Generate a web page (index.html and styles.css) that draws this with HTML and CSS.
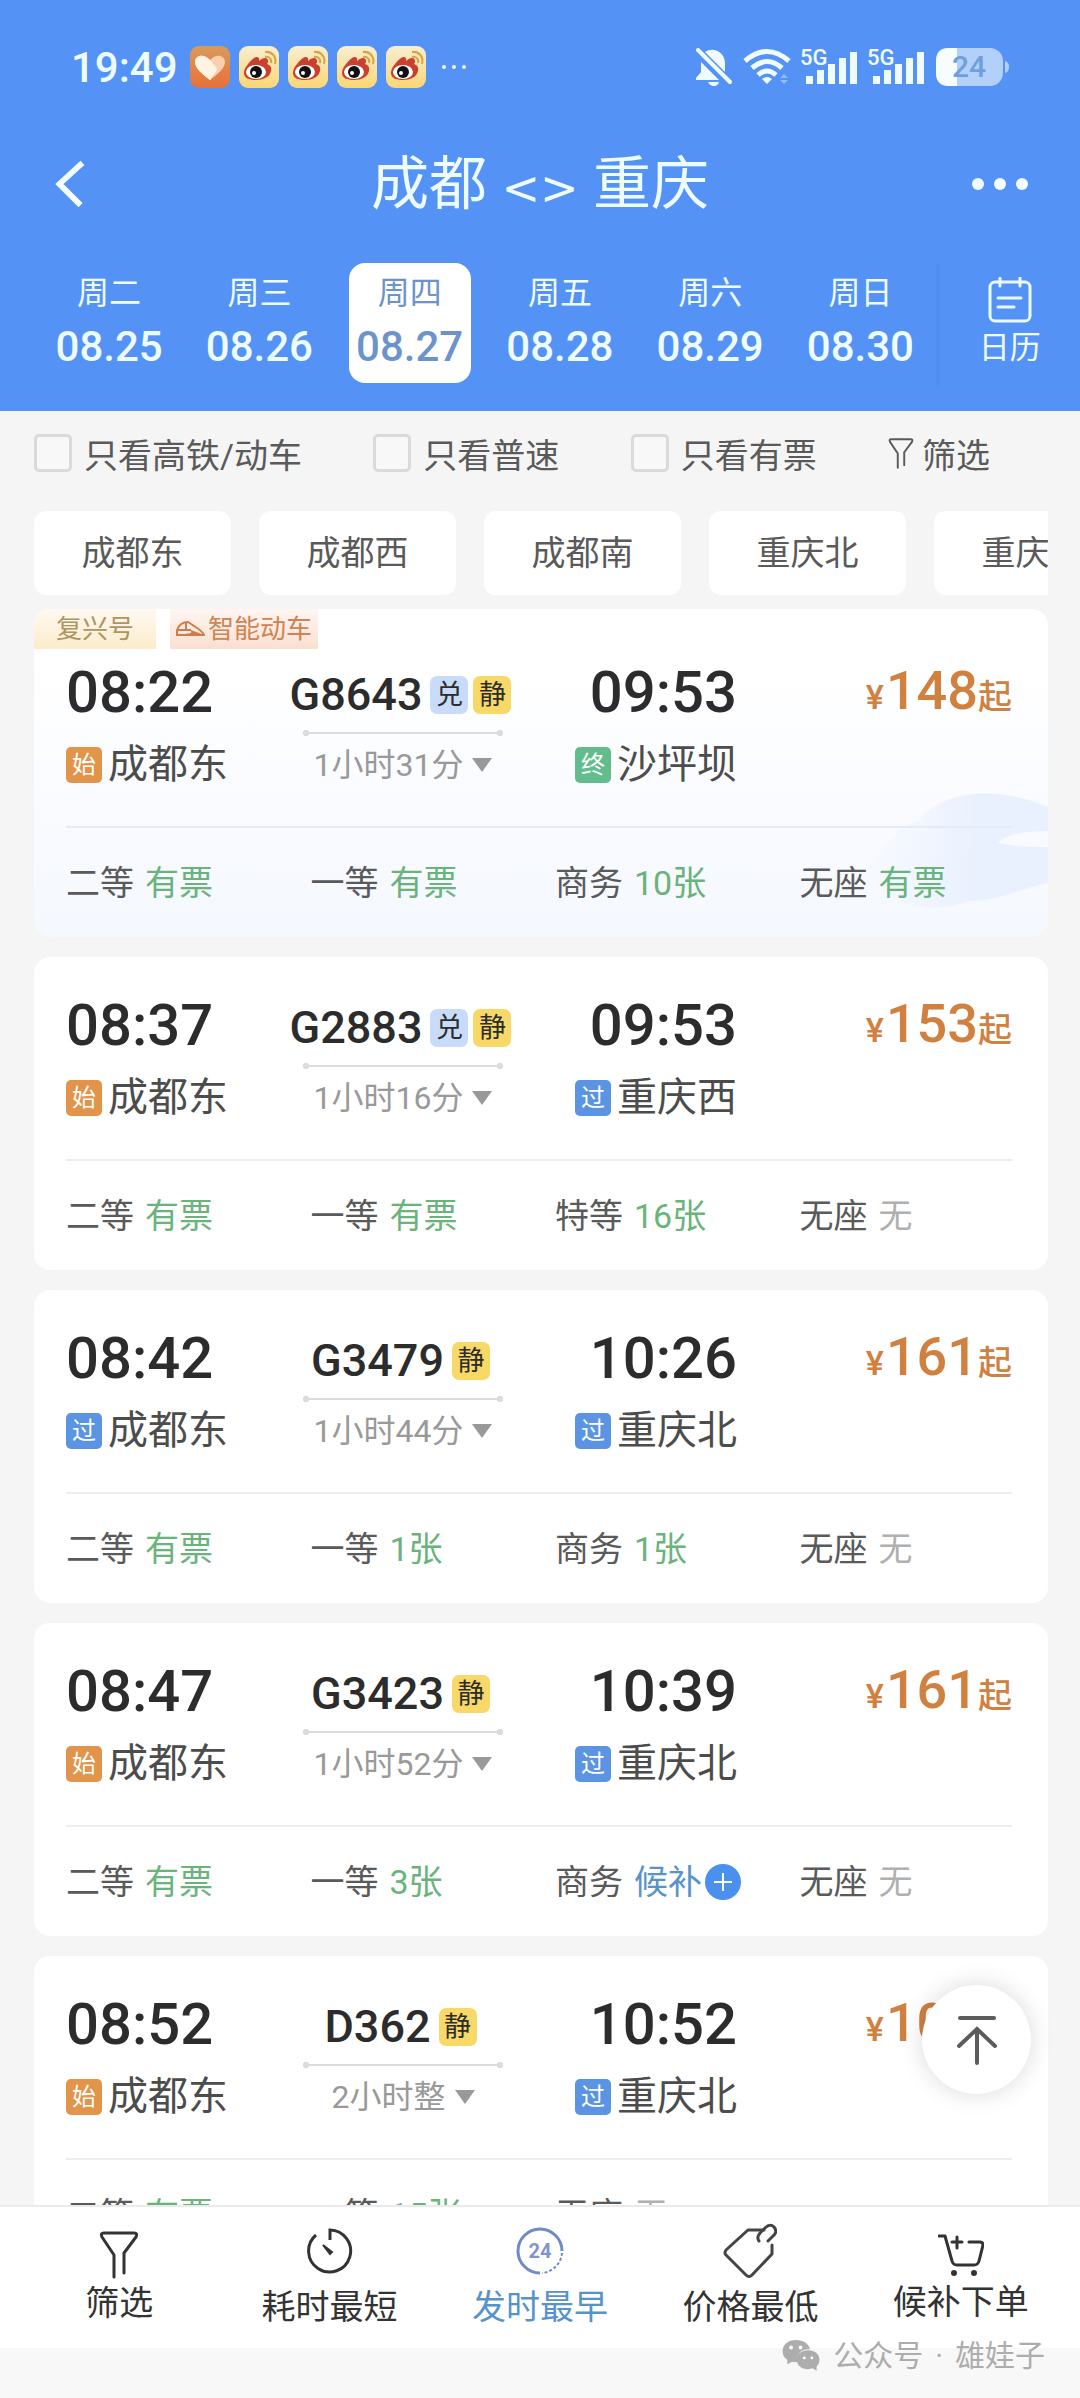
FILE: index.html
```html
<!DOCTYPE html>
<html lang="zh-CN">
<head>
  <meta charset="UTF-8">
  <meta name="viewport" content="width=device-width, initial-scale=1.0">
  <title>成都 - 重庆</title>
  <link rel="stylesheet" href="styles.css">
</head>
<body>
  <svg class="defs" aria-hidden="true">
    <symbol id="weibo" viewBox="0 0 40 42">
      <linearGradient id="wbg" x1="0" y1="0" x2="0" y2="1"><stop offset="0" stop-color="#f7efd2"/><stop offset="1" stop-color="#fbd673"/></linearGradient>
      <rect width="40" height="42" rx="9" fill="url(#wbg)"/>
      <path d="M5 27c0-5 5-11 10-15 3-2 6-1 5 3 4-4 9-4 9 0 0 1 0 2-1 3 3 1 5 3 4 7-1 6-8 9-15 9S5 32 5 27z" fill="#c9402f"/>
      <ellipse cx="17" cy="26" rx="10" ry="7" fill="#fff"/>
      <circle cx="17" cy="26" r="6" fill="#111"/>
      <circle cx="15" cy="27" r="2" fill="#fff"/>
      <path d="M26 6c7-1 12 5 10 12M26 11c4-1 7 2 6 6" fill="none" stroke="#d9a441" stroke-width="2"/>
    </symbol>
    <symbol id="bars" viewBox="0 0 56 38">
      <path d="M4 28h7v8H4zM15 22h7v14h-7zM26 16h7v20h-7zM37 10h7v26h-7zM48 4h7v32h-7z"/>
    </symbol>
    <symbol id="funnel" viewBox="0 0 40 48">
      <path d="M15 46V24L3 6q-2-4 2-4h30q4 0 2 4L25 22v20" fill="none" stroke="currentColor" stroke-width="3" stroke-linecap="round" stroke-linejoin="round"/>
    </symbol>
  </svg>

  <header>
    <div class="status">
      <div class="status-side">
        <span class="clock">19:49</span>
        <svg width="40" height="42" viewBox="0 0 40 42"><linearGradient id="hbg" x1="0" y1="0" x2="0" y2="1"><stop offset="0" stop-color="#d99a5c"/><stop offset="1" stop-color="#e8703a"/></linearGradient><rect width="40" height="42" rx="9" fill="url(#hbg)"/><path d="M20 34C12 28 5 22 5 16c0-7 9-9 15-2 6-7 15-5 15 2 0 6-7 12-15 18z" fill="#f9cfae"/><path d="M20 34C12 28 5 22 5 16c0-7 9-9 15-2l6 7q2 3-1 6z" fill="#fff3e4"/></svg>
        <svg width="40" height="42"><use href="#weibo"/></svg>
        <svg width="40" height="42"><use href="#weibo"/></svg>
        <svg width="40" height="42"><use href="#weibo"/></svg>
        <svg width="40" height="42"><use href="#weibo"/></svg>
        <svg class="more-apps" width="26" height="6" viewBox="0 0 26 6"><circle cx="3" cy="3" r="2"/><circle cx="13" cy="3" r="2"/><circle cx="23" cy="3" r="2"/></svg>
      </div>
      <div class="status-side icons">
        <svg width="36" height="38" viewBox="0 0 36 38"><path d="M9 4c9-6 20 1 20 11v9zM5 14l18 18H0v-2l5-6zM12 34h11q-1 4-5 4t-6-4z"/><path d="M2 2l32 32" stroke="#f0fbff" stroke-width="4" stroke-linecap="round"/></svg>
        <svg width="48" height="36" viewBox="0 0 48 36" fill="none" stroke="#f0fbff" stroke-width="5"><path d="M2 12q22-19 44 0M9 19q15-13 30 0M15 26q9-8 18 0"/><path d="M24 35l-5-5q5-4 10 0z" fill="#f0fbff" stroke="none"/><path d="M37 29l4-4 4 4zM37 31l4 4 4-4z" fill="#8fbcf8" stroke="none"/></svg>
        <svg width="56" height="38"><text x="-2" y="17">5G</text><use href="#bars"/></svg>
        <svg width="56" height="38"><text x="-2" y="17">5G</text><use href="#bars"/></svg>
        <svg width="74" height="38" viewBox="0 0 74 38"><rect width="67" height="38" rx="13" fill="#b3d0fb"/><path d="M13 0h8v38h-8Q0 38 0 25V13Q0 0 13 0z" fill="#f6fdff"/><path d="M69 13q4 1 4 6t-4 6z" fill="#b3d0fb"/><text class="level" x="33" y="29" text-anchor="middle">24</text></svg>
      </div>
    </div>

    <div class="title-bar">
      <button class="icon-btn" aria-label="返回"><svg width="34" height="48" viewBox="0 0 34 50" fill="none" stroke="#f4fdff" stroke-width="6"><path d="M31 3L7 25l22 22"/></svg></button>
      <h1>成都 <span>&lt;&gt;</span> 重庆</h1>
      <button class="icon-btn" aria-label="更多"><svg width="56" height="12" viewBox="0 0 56 12" fill="#f4fdff"><circle cx="6" cy="6" r="6"/><circle cx="28" cy="6" r="6"/><circle cx="50" cy="6" r="6"/></svg></button>
    </div>

    <div class="dates">
      <div class="days">
        <button class="day"><span>周二</span><b>08.25</b></button>
        <button class="day"><span>周三</span><b>08.26</b></button>
        <button class="day active"><span>周四</span><b>08.27</b></button>
        <button class="day"><span>周五</span><b>08.28</b></button>
        <button class="day"><span>周六</span><b>08.29</b></button>
        <button class="day"><span>周日</span><b>08.30</b></button>
      </div>
      <button class="calendar">
        <svg width="44" height="46" viewBox="0 0 44 46" fill="none" stroke="#eafbff" stroke-width="3" stroke-linecap="round"><rect x="2" y="5" width="40" height="39" rx="5"/><path d="M12 1v8M32 1v8M10 21h23M10 30h16"/></svg>
        日历
      </button>
    </div>
  </header>

  <main>
    <div class="filters">
      <label><input type="checkbox">只看高铁/动车</label>
      <label><input type="checkbox">只看普速</label>
      <label><input type="checkbox">只看有票</label>
      <button><svg width="26" height="31"><use href="#funnel"/></svg>筛选</button>
    </div>

    <div class="stations">
      <button>成都东</button>
      <button>成都西</button>
      <button>成都南</button>
      <button>重庆北</button>
      <button>重庆西</button>
    </div>

    <div class="trains">
      <article class="card smart">
        <svg class="cloud" width="180" height="130" viewBox="0 0 180 130"><linearGradient id="cbg"><stop offset="0" stop-color="#eaf1fe" stop-opacity="0"/><stop offset="0.6" stop-color="#eaf1fe"/></linearGradient><path d="M0 80C20 40 40 30 50 28 80-8 140-4 180 14v24c-20 0-40 2-50 12 20 4 35 4 50 4v36c-30 6-50 18-80 18C70 120 20 118 0 80z" fill="url(#cbg)"/></svg>
        <div class="labels">
          <span class="fuxing">复兴号</span>
          <span class="zhineng"><svg width="29" height="16" viewBox="0 0 29 16" fill="none" stroke="#d07c4c" stroke-width="2"><path d="M1 14V9q3-8 11-8l9 6q6 4 7 7zM1 9h14M10 2v7"/><path d="M15 9l13 5H3l12-2z" fill="#d07c4c" stroke="none"/></svg>智能动车</span>
        </div>
        <div class="trip">
          <div class="from"><p class="time">08:22</p><p class="stop"><i class="start">始</i>成都东</p></div>
          <div class="train"><p class="no">G8643<i class="dui">兑</i><i class="jing">静</i></p><div class="line"></div><p class="dur">1小时31分<span class="arrow"></span></p></div>
          <div class="to"><p class="time">09:53</p><p class="stop"><i class="end">终</i>沙坪坝</p></div>
          <p class="price"><small>¥</small>148<small>起</small></p>
        </div>
        <div class="seats"><p>二等 <em>有票</em></p><p>一等 <em>有票</em></p><p>商务 <em>10张</em></p><p>无座 <em>有票</em></p></div>
      </article>

      <article class="card">
        <div class="trip">
          <div class="from"><p class="time">08:37</p><p class="stop"><i class="start">始</i>成都东</p></div>
          <div class="train"><p class="no">G2883<i class="dui">兑</i><i class="jing">静</i></p><div class="line"></div><p class="dur">1小时16分<span class="arrow"></span></p></div>
          <div class="to"><p class="time">09:53</p><p class="stop"><i class="pass">过</i>重庆西</p></div>
          <p class="price"><small>¥</small>153<small>起</small></p>
        </div>
        <div class="seats"><p>二等 <em>有票</em></p><p>一等 <em>有票</em></p><p>特等 <em>16张</em></p><p>无座 <em class="none">无</em></p></div>
      </article>

      <article class="card">
        <div class="trip">
          <div class="from"><p class="time">08:42</p><p class="stop"><i class="pass">过</i>成都东</p></div>
          <div class="train"><p class="no">G3479<i class="jing">静</i></p><div class="line"></div><p class="dur">1小时44分<span class="arrow"></span></p></div>
          <div class="to"><p class="time">10:26</p><p class="stop"><i class="pass">过</i>重庆北</p></div>
          <p class="price"><small>¥</small>161<small>起</small></p>
        </div>
        <div class="seats"><p>二等 <em>有票</em></p><p>一等 <em>1张</em></p><p>商务 <em>1张</em></p><p>无座 <em class="none">无</em></p></div>
      </article>

      <article class="card">
        <div class="trip">
          <div class="from"><p class="time">08:47</p><p class="stop"><i class="start">始</i>成都东</p></div>
          <div class="train"><p class="no">G3423<i class="jing">静</i></p><div class="line"></div><p class="dur">1小时52分<span class="arrow"></span></p></div>
          <div class="to"><p class="time">10:39</p><p class="stop"><i class="pass">过</i>重庆北</p></div>
          <p class="price"><small>¥</small>161<small>起</small></p>
        </div>
        <div class="seats"><p>二等 <em>有票</em></p><p>一等 <em>3张</em></p><p>商务 <em class="wait">候补</em><svg class="plus" width="36" height="36" viewBox="0 0 36 36"><circle cx="18" cy="18" r="18" fill="#4a90ee"/><path d="M18 9v18M9 18h18" stroke="#fff" stroke-width="2"/></svg></p><p>无座 <em class="none">无</em></p></div>
      </article>

      <article class="card">
        <div class="trip">
          <div class="from"><p class="time">08:52</p><p class="stop"><i class="start">始</i>成都东</p></div>
          <div class="train"><p class="no">D362<i class="jing">静</i></p><div class="line"></div><p class="dur">2小时整<span class="arrow"></span></p></div>
          <div class="to"><p class="time">10:52</p><p class="stop"><i class="pass">过</i>重庆北</p></div>
          <p class="price"><small>¥</small>104<small>起</small></p>
        </div>
        <div class="seats"><p>二等 <em>有票</em></p><p>一等 <em>15张</em></p><p>无座 <em class="none">无</em></p></div>
      </article>
    </div>

    <button class="to-top" aria-label="回到顶部"><svg width="40" height="50" viewBox="0 0 40 50" fill="none" stroke="#5c5c5c" stroke-width="4" stroke-linecap="round"><path d="M3 3h34M20 48V14M2 31l18-17 18 17"/></svg></button>
  </main>

  <footer>
    <nav>
      <button><svg class="short" width="40" height="48"><use href="#funnel"/></svg>筛选</button>
      <button><svg width="46" height="48" viewBox="0 0 46 48" fill="none" stroke="#333" stroke-width="3"><path d="M9 8a21 21 0 1 0 14-5v10"/><path d="M16 18l9 7-2 2z" fill="#333" stroke-width="2"/></svg>耗时最短</button>
      <button class="active"><svg width="48" height="48" viewBox="0 0 48 48" fill="none" stroke="#6d8bc9" stroke-width="3"><path d="M24 46A22 22 0 1 1 46 24"/><path d="M46 26a22 22 0 0 1-20 20" stroke-width="2" stroke-dasharray="3 2"/><text class="hours" x="24" y="31" text-anchor="middle">24</text></svg>发时最早</button>
      <button><svg class="tall" width="54" height="56" viewBox="0 0 54 56" fill="none" stroke="#444" stroke-width="3" stroke-linecap="round" stroke-linejoin="round"><path d="M41 7H25L3 27q-2 3 0 5l20 20q3 3 6 0l20-21V22"/><path d="M36 18q-3-4 2-9l4-4q5-5 9-1 4 5-1 9l-5 5"/></svg>价格最低</button>
      <button><svg class="cart" width="46" height="44" viewBox="0 0 46 44" fill="none" stroke="#333" stroke-width="3" stroke-linecap="round" stroke-linejoin="round"><path d="M1 3h6l7 25q1 4 5 4h17q4 0 5-4l4-16q0-3-3-3H31M19 4v11M14 9h10"/><circle cx="16" cy="40" r="2" fill="#333" stroke-width="2"/><circle cx="36" cy="40" r="2" fill="#333" stroke-width="2"/></svg>候补下单</button>
    </nav>
    <div class="watermark">
      <svg width="40" height="34" viewBox="0 0 41 36" fill="#adadad"><path d="M15 1C7 1 1 6 1 13c0 4 2 7 5 9v5l5-3q3 1 6 0c-2-8 4-14 13-13C29 5 23 1 15 1z"/><path d="M28 12c-7 0-12 4-12 10s5 10 12 10l5-1 4 3v-5c2-2 3-4 3-7 0-6-5-10-12-10z"/><g fill="#fff"><circle cx="10" cy="9" r="2"/><circle cx="20" cy="9" r="2"/><circle cx="24" cy="20" r="1.5"/><circle cx="32" cy="20" r="1.5"/></g></svg>
      <span>公众号</span><span>·</span><span>雄娃子</span>
    </div>
  </footer>
</body>
</html>
```

FILE: styles.css
```css
* {
  box-sizing: border-box;
}
body {
  margin: 0;
  height: 100vh;
  display: flex;
  flex-direction: column;
  overflow: hidden;
  font-family: Roboto, "Noto Sans CJK SC", sans-serif;
  font-size: 34px;
  color: #5a5a5a;
  background: #f5f5f5;
}
h1, p {
  margin: 0;
}
i, em {
  font-style: normal;
}
svg {
  flex: none;
}
button {
  padding: 0;
  border: none;
  background: none;
  font: inherit;
  color: inherit;
  cursor: pointer;
}
.defs {
  position: absolute;
  width: 0;
  height: 0;
}

/* header */
header {
  flex: none;
  background: #5493f5;
  color: #effcff;
}
.status {
  display: flex;
  justify-content: space-between;
  align-items: center;
  height: 134px;
  padding: 0 70px 0 71px;
  fill: #f0fbff;
}
.status-side {
  display: flex;
  align-items: center;
  gap: 9px;
}
.status-side.icons {
  gap: 11px;
}
.icons svg {
  overflow: visible;
}
.icons text {
  font-size: 22px;
  font-weight: 500;
}
.icons .level {
  font-size: 30px;
  fill: #6f9fdc;
}
.clock {
  margin-right: 3px;
  font-size: 42px;
  font-weight: 500;
}
.more-apps {
  margin-left: 6px;
}
.title-bar {
  display: flex;
  justify-content: space-between;
  align-items: center;
  height: 100px;
  padding: 0 52px;
}
.title-bar h1 {
  padding-top: 4px;
  font-size: 58px;
  font-weight: 400;
  line-height: 84px;
}
.title-bar h1 span {
  font-family: "DejaVu Sans", sans-serif;
  font-size: 46px;
}
.icon-btn {
  width: 60px;
  display: flex;
}
.icon-btn:last-child {
  justify-content: flex-end;
}
.dates {
  display: flex;
  height: 177px;
  padding: 29px 0 0 34px;
}
.days {
  flex: 905;
  display: grid;
  grid-template-columns: repeat(6, 1fr);
  height: 124px;
  border-right: 4px solid #508ef0;
}
.day {
  display: flex;
  flex-direction: column;
  align-items: center;
  margin: 0 14px;
  padding-top: 4px;
  height: 120px;
  border-radius: 16px;
  line-height: 53px;
}
.day span {
  font-size: 32px;
}
.day b {
  font-size: 42px;
  font-weight: 500;
}
.day.active {
  background: #fff;
  color: #6c94cc;
}
.calendar {
  flex: 141;
  display: flex;
  flex-direction: column;
  align-items: center;
  padding-top: 14px;
  gap: 2px;
  font-size: 31px;
  line-height: 46px;
}

/* filters */
main {
  flex: 1;
  min-height: 0;
  position: relative;
  overflow: hidden;
  padding: 0 32px 0 34px;
}
.filters {
  display: flex;
  justify-content: space-between;
  align-items: center;
  height: 84px;
  padding-right: 58px;
}
.filters label, .filters button {
  display: flex;
  align-items: center;
  gap: 12px;
}
.filters button {
  gap: 8px;
}
.filters input {
  appearance: none;
  width: 38px;
  height: 38px;
  margin: 0;
  border: 3px solid #dadada;
  border-radius: 5px;
  background: #f8f8f8;
}
.stations {
  display: flex;
  gap: 28px;
  padding: 16px 0 14px;
  overflow: hidden;
}
.stations button {
  flex: none;
  width: 197px;
  height: 84px;
  padding-bottom: 6px;
  border-radius: 12px;
  background: #fff;
}

/* train list */
.trains {
  display: flex;
  flex-direction: column;
  gap: 20px;
}
.card {
  position: relative;
  flex: none;
  padding: 32px 0 28px 32px;
  border-radius: 16px;
  background: #fff;
  overflow: hidden;
}
.card.smart {
  padding-top: 0;
  background: linear-gradient(#fff 20%, #f9fbff 60%, #f5f8fe);
}
.cloud {
  position: absolute;
  right: 0;
  bottom: 14px;
}
.labels {
  display: flex;
  gap: 14px;
  height: 40px;
  margin: 0 0 7px -32px;
  font-size: 26px;
  line-height: 40px;
}
.fuxing {
  padding: 0 22px;
  color: #ad9561;
  background: linear-gradient(#fff9f3, #fbecca);
}
.zhineng {
  display: flex;
  align-items: center;
  gap: 3px;
  padding: 0 6px;
  color: #cd8452;
  background: linear-gradient(#fff6f3, #fbdfd0);
}
.trip {
  position: relative;
  display: grid;
  grid-template-columns: 212fr 250fr 209fr 275fr;
  height: 172px;
  margin-right: 36px;
  border-bottom: 2px solid #ededed;
}
.smart .trip {
  border-color: #e6ebf2;
}
.time {
  font-size: 58px;
  font-weight: 500;
  line-height: 72px;
  color: #2c2c2c;
}
.stop {
  display: flex;
  align-items: center;
  gap: 6px;
  margin-top: 13px;
  font-size: 40px;
  line-height: 48px;
  color: #4c4c4c;
}
.stop i {
  width: 36px;
  height: 36px;
  border-radius: 5px;
  font-size: 24px;
  line-height: 36px;
  text-align: center;
  color: #fff;
}
.start {
  background: #e2944a;
}
.end {
  background: #61bd8d;
}
.pass {
  background: #5b94e3;
}
.train {
  display: flex;
  flex-direction: column;
  align-items: center;
  padding-top: 14px;
}
.no {
  display: flex;
  align-items: center;
  gap: 5px;
  padding-right: 5px;
  font-size: 45px;
  font-weight: 500;
  line-height: 50px;
  color: #2c2c2c;
}
.no i {
  width: 38px;
  height: 38px;
  border-radius: 7px;
  font-size: 27px;
  font-weight: 400;
  line-height: 38px;
  text-align: center;
}
.no i:first-of-type {
  margin-left: 3px;
}
.dui {
  background: #c8dbf8;
}
.jing {
  background: #f8d967;
}
.line {
  width: 200px;
  height: 6px;
  margin: 10px 0 9px;
  background: radial-gradient(circle at 3px 3px, #dcdcdc 3px, transparent 3px),
    radial-gradient(circle at 197px 3px, #dcdcdc 3px, transparent 3px),
    linear-gradient(transparent 2px, #dcdcdc 2px, #dcdcdc 4px, transparent 4px);
}
.dur {
  display: flex;
  align-items: center;
  gap: 9px;
  font-size: 32px;
  line-height: 40px;
  color: #999;
}
.arrow {
  border: 10px solid transparent;
  border-top: 14px solid #999;
  border-bottom: none;
}
.to {
  display: flex;
  flex-direction: column;
  align-items: flex-end;
}
.price {
  text-align: right;
  font-size: 54px;
  font-weight: 500;
  line-height: 70px;
  color: #d0813f;
}
.price small {
  margin-right: 2px;
  font-size: 34px;
}
.price small:last-child {
  margin-right: 0;
}
.seats {
  position: relative;
  display: grid;
  grid-template-columns: repeat(4, 1fr);
  padding: 30px 4px 1px 0;
  line-height: 50px;
}
.seats p {
  display: flex;
  align-items: center;
  gap: 11px;
}
.seats em {
  color: #6ab37b;
}
.seats .none {
  color: #b0b0b0;
}
.seats .wait {
  color: #5793cb;
}
.plus {
  margin-left: -8px;
}
.to-top {
  position: absolute;
  right: 49px;
  bottom: 111px;
  width: 109px;
  height: 109px;
  display: flex;
  justify-content: center;
  align-items: center;
  border-radius: 50%;
  background: #fff;
  box-shadow: 0 0 24px rgba(0, 0, 0, 0.15);
}

/* bottom bar */
footer {
  flex: none;
  position: relative;
  padding-bottom: 50px;
  background: #f8f8f8;
}
nav {
  display: grid;
  grid-template-columns: repeat(5, 1fr);
  height: 143px;
  padding: 0 14px;
  border-top: 2px solid #ebebeb;
  background: #fff;
  color: #333;
}
nav button {
  display: flex;
  flex-direction: column;
  align-items: center;
  padding-top: 20px;
  line-height: 50px;
}
nav svg {
  margin-bottom: 7px;
}
nav .short {
  margin: 4px 0 -1px;
}
nav .tall {
  margin: -4px 0 3px;
}
nav .cart {
  margin: 6px 0 0;
}
nav .active {
  color: #5793cb;
}
.hours {
  font-size: 20px;
  font-weight: 700;
  fill: #7d97cd;
  stroke: none;
}
.watermark {
  position: absolute;
  right: 35px;
  bottom: 22px;
  display: flex;
  align-items: center;
  gap: 12px;
  font-size: 30px;
  line-height: 40px;
  color: #adadad;
}
```
